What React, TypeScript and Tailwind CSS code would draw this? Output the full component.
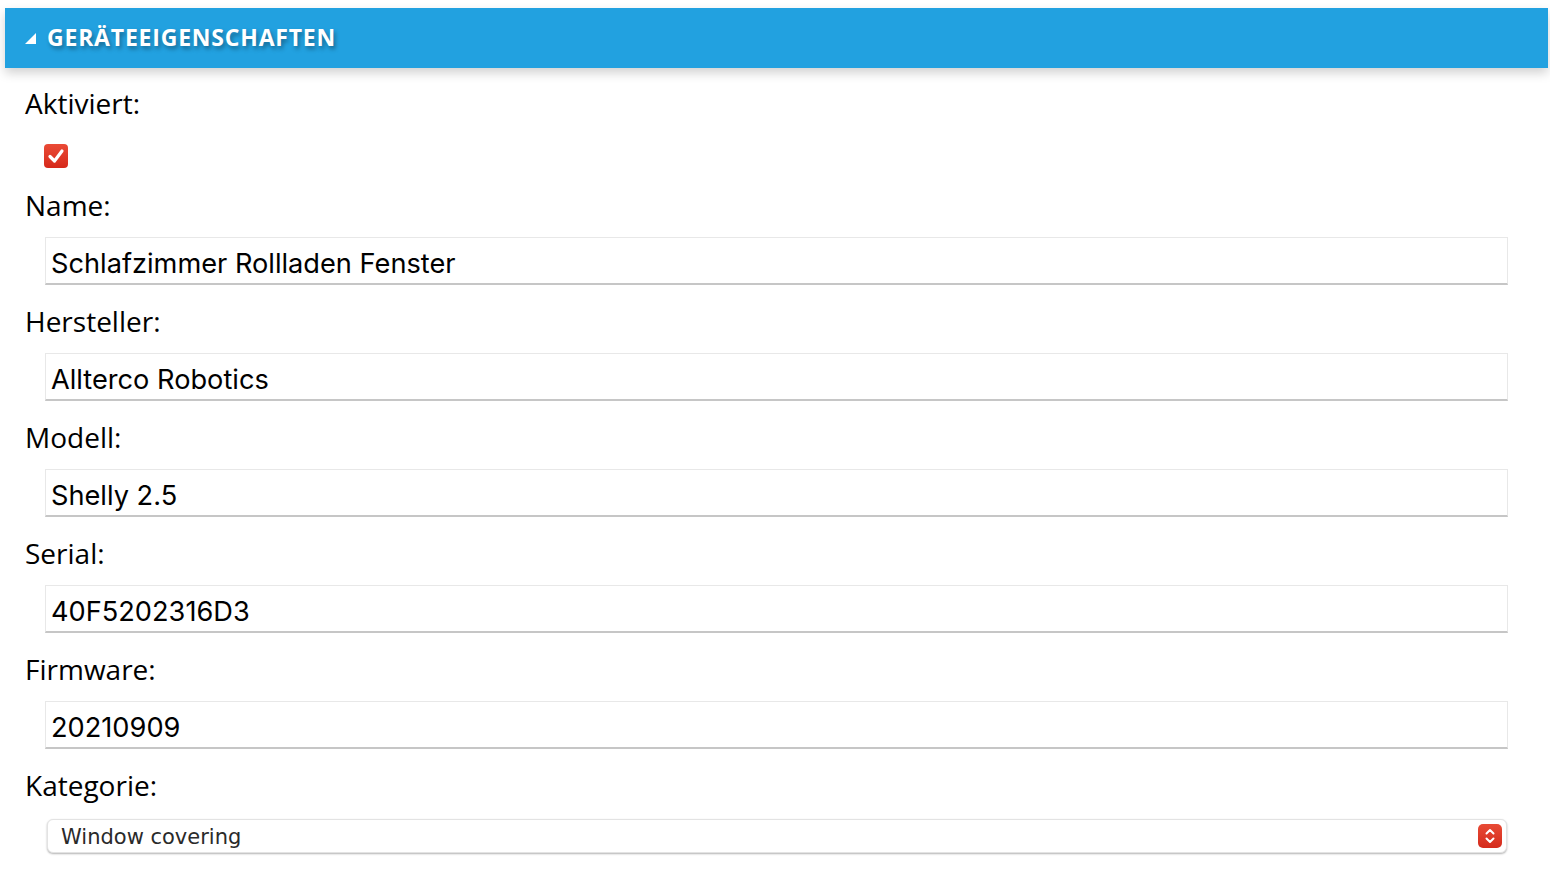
const FIELDS = [
  { label: 'Name:', value: 'Schlafzimmer Rollladen Fenster' },
  { label: 'Hersteller:', value: 'Allterco Robotics' },
  { label: 'Modell:', value: 'Shelly 2.5' },
  { label: 'Serial:', value: '40F5202316D3' },
  { label: 'Firmware:', value: '20210909' },
];

function Label({ children }: { children: string }) {
  return (
    <div className="h-[36px] pl-5 text-[28px] leading-[36px] text-black [font-family:'Open_Sans',sans-serif]">
      {children}
    </div>
  );
}

function TextField({ value }: { value: string }) {
  return (
    <div className="ml-10 mr-10 mt-[14px] mb-[18px] flex h-[48px] items-center border border-[#e8e8e8] border-b-2 border-b-[#c6c6c6] bg-white pl-[5px] pt-[7px] text-[27.2px] text-black [font-family:Inter,sans-serif]">
      {value}
    </div>
  );
}

export default function App() {
  return (
    <div className="min-h-screen bg-white pt-2 pl-[5px] pr-[2px]">
      <div className="flex h-[60px] items-center bg-[#22a1e0] pb-[2px] pl-5 shadow-[0_5px_10px_rgba(0,0,0,0.18)]">
        <svg width="11" height="11" viewBox="0 0 11 11" className="mt-[3px]">
          <polygon points="11,0 11,11 0,11" fill="white" />
        </svg>
        <span className="ml-[11px] text-[23px] font-bold uppercase tracking-[0.8px] text-white [font-family:'Open_Sans',sans-serif] [text-shadow:2px_3px_4px_rgba(0,0,0,0.35)]">
          Geräteeigenschaften
        </span>
      </div>

      <div className="pt-[17px]">
        <Label>Aktiviert:</Label>
        <div className="ml-[39px] mt-[23px] mb-[19px] flex h-6 w-6 items-center justify-center rounded-[4px] bg-gradient-to-b from-[#ea4a36] to-[#d6281a]">
          <svg width="22" height="22" viewBox="0 0 22 22">
            <path d="M5 11.5 L9.5 16 L17 6" fill="none" stroke="white" strokeWidth="3.2" strokeLinecap="round" strokeLinejoin="round" />
          </svg>
        </div>

        {FIELDS.map((f) => (
          <div key={f.label}>
            <Label>{f.label}</Label>
            <TextField value={f.value} />
          </div>
        ))}

        <Label>Kategorie:</Label>
        <div className="ml-[42px] mr-[41px] mt-4 flex h-[34px] items-center justify-between rounded-[6px] border border-[#e3e3e3] bg-white pl-[13px] pr-[4px] shadow-[0_1px_2px_rgba(0,0,0,0.3)]">
          <span className="pt-[3px] text-[21px] text-[#2a2a2a] [font-family:'DejaVu_Sans',sans-serif]">Window covering</span>
          <div className="flex h-6 w-6 items-center justify-center rounded-[5px] bg-gradient-to-b from-[#e84a35] to-[#d52a1b]">
            <svg width="14" height="18" viewBox="0 0 14 18">
              <path d="M3.5 6.5 L7 3 L10.5 6.5 M3.5 11.5 L7 15 L10.5 11.5" fill="none" stroke="white" strokeWidth="2" strokeLinecap="round" strokeLinejoin="round" />
            </svg>
          </div>
        </div>
      </div>
    </div>
  );
}
